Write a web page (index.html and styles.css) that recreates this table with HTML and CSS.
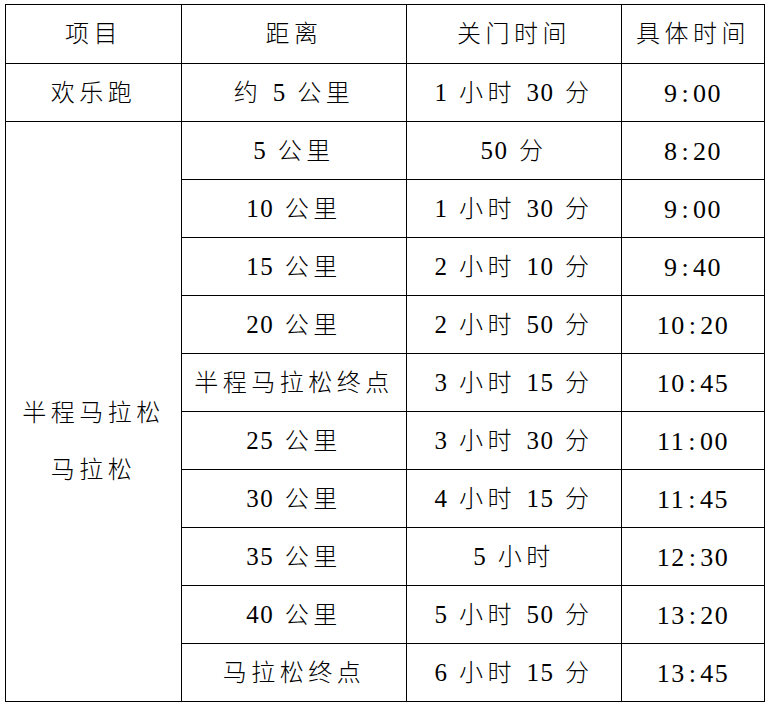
FILE: index.html
```html
<!DOCTYPE html>
<html lang="zh-CN">
<head>
<meta charset="utf-8">
<title>关门时间</title>
<link rel="stylesheet" href="styles.css">
</head>
<body>
<table class="schedule">
  <colgroup>
    <col class="c1"><col class="c2"><col class="c3"><col class="c4">
  </colgroup>
  <tr class="head"><td>项目</td><td>距离</td><td>关门时间</td><td>具体时间</td></tr>
  <tr><td>欢乐跑</td><td>约 <span class="n">5</span> 公里</td><td><span class="n">1</span> 小时 <span class="n">30</span> 分</td><td class="t">9<span class="c">:</span>00</td></tr>
  <tr><td rowspan="10" class="merged"><div class="mtext">半程马拉松<br>马拉松</div></td><td><span class="n">5</span> 公里</td><td><span class="n">50</span> 分</td><td class="t">8<span class="c">:</span>20</td></tr>
  <tr><td><span class="n">10</span> 公里</td><td><span class="n">1</span> 小时 <span class="n">30</span> 分</td><td class="t">9<span class="c">:</span>00</td></tr>
  <tr><td><span class="n">15</span> 公里</td><td><span class="n">2</span> 小时 <span class="n">10</span> 分</td><td class="t">9<span class="c">:</span>40</td></tr>
  <tr><td><span class="n">20</span> 公里</td><td><span class="n">2</span> 小时 <span class="n">50</span> 分</td><td class="t">10<span class="c">:</span>20</td></tr>
  <tr><td>半程马拉松终点</td><td><span class="n">3</span> 小时 <span class="n">15</span> 分</td><td class="t">10<span class="c">:</span>45</td></tr>
  <tr><td><span class="n">25</span> 公里</td><td><span class="n">3</span> 小时 <span class="n">30</span> 分</td><td class="t">11<span class="c">:</span>00</td></tr>
  <tr><td><span class="n">30</span> 公里</td><td><span class="n">4</span> 小时 <span class="n">15</span> 分</td><td class="t">11<span class="c">:</span>45</td></tr>
  <tr><td><span class="n">35</span> 公里</td><td><span class="n">5</span> 小时</td><td class="t">12<span class="c">:</span>30</td></tr>
  <tr><td><span class="n">40</span> 公里</td><td><span class="n">5</span> 小时 <span class="n">50</span> 分</td><td class="t">13<span class="c">:</span>20</td></tr>
  <tr><td>马拉松终点</td><td><span class="n">6</span> 小时 <span class="n">15</span> 分</td><td class="t">13<span class="c">:</span>45</td></tr>
</table>
</body>
</html>
```

FILE: styles.css
```css
html, body {
  margin: 0;
  padding: 0;
  background: #fff;
}
body {
  padding: 4px 0 0 5px;
  font-family: "Liberation Serif", "Noto Sans CJK SC", serif;
  color: #000;
}
.schedule {
  border-collapse: collapse;
  table-layout: fixed;
  width: 759px;
}
.c1 { width: 176px; }
.c2 { width: 225px; }
.c3 { width: 215px; }
.c4 { width: 143px; }
.schedule td {
  border: 1px solid #000;
  height: 57px;
  padding: 0;
  text-align: center;
  vertical-align: middle;
  font-size: 24px;
  font-weight: 300;
  letter-spacing: 4.5px;
  white-space: nowrap;
  line-height: 30px;
}
.schedule .head td {
  height: 58px;
}
.n {
  font-size: 25px;
  letter-spacing: 1.5px;
  font-weight: 400;
  line-height: 20px;
}
.schedule td.t {
  font-size: 26px;
  font-weight: 400;
  letter-spacing: 1.5px;
  padding-top: 2px;
  height: 55px;
}
.c {
  margin: 0 3px 0 3px;
}
.schedule td.merged {
  vertical-align: top;
  padding: 0;
  height: auto;
}
.mtext {
  padding-top: 263px;
  line-height: 57px;
}
```
